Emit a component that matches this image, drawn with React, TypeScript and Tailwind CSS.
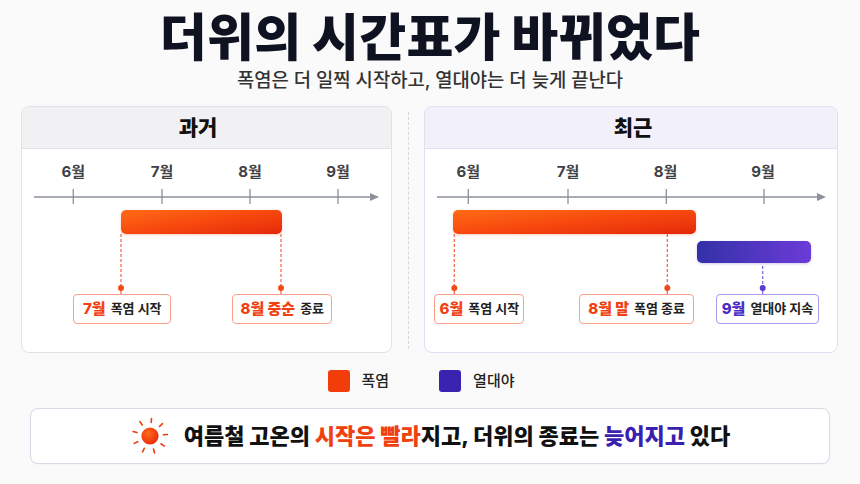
import React from "react";

function Sun() {
  const rays = [-125, -85, -45, -5, 35, 75, 115, 155, 195];
  return (
    <svg width="40" height="40" viewBox="0 0 40 40" className="shrink-0">
      <defs>
        <radialGradient id="sunG" cx="40%" cy="35%" r="70%">
          <stop offset="0%" stopColor="#ff6a1c" />
          <stop offset="100%" stopColor="#e8290a" />
        </radialGradient>
      </defs>
      <circle cx="20" cy="20" r="8.6" fill="url(#sunG)" />
      {rays.map((a) => {
        const r = (a * Math.PI) / 180;
        return (
          <line
            key={a}
            x1={20 + Math.cos(r) * 13.5}
            y1={20 + Math.sin(r) * 13.5}
            x2={20 + Math.cos(r) * 17.5}
            y2={20 + Math.sin(r) * 17.5}
            stroke="#ee3a0e"
            strokeWidth="1.6"
            strokeLinecap="round"
          />
        );
      })}
    </svg>
  );
}

function Axis({ end, ticks }: { end: number; ticks: number[] }) {
  return (
    <>
      <line x1="12" y1="48" x2={end - 8} y2="48" stroke="#8b909c" strokeWidth="1.3" />
      <polygon points={`${end - 9},44 ${end},48 ${end - 9},52`} fill="#8b909c" />
      {ticks.map((t) => (
        <line key={t} x1={t} y1="40" x2={t} y2="55" stroke="#8b909c" strokeWidth="1.3" />
      ))}
    </>
  );
}

function Connector({ x, from, color, dot }: { x: number; from: number; color: string; dot: string }) {
  return (
    <>
      <line x1={x} y1={from} x2={x} y2="139" stroke={color} strokeWidth="1.2" strokeDasharray="3 2" />
      <line x1={x} y1="139" x2={x} y2="145" stroke={color} strokeWidth="1.2" />
      <circle cx={x} cy="139" r="3" fill={dot} />
    </>
  );
}

export default function App() {
  return (
    <div className="w-[860px] h-[484px] overflow-hidden bg-[#fafafb] flex flex-col items-center font-['Inter','Noto_Sans_CJK_KR',sans-serif] text-[#111]">
      <h1 className="mt-[12px] text-[51px] leading-[51px] font-black text-[#0f1220] tracking-[0.3px]">
        더위의 시간표가 바뀌었다
      </h1>
      <p className="mt-[6px] text-[18.8px] leading-[24px] font-medium text-[#333]">
        폭염은 더 일찍 시작하고, 열대야는 더 늦게 끝난다
      </p>

      <div className="mt-[13px] w-full px-[21px] flex">
        {/* Left panel */}
        <div className="w-[371px] h-[247px] rounded-[8px] border border-[#e1e1e8] bg-white overflow-hidden flex flex-col">
          <div className="h-[42px] shrink-0 bg-[#f1f1f4] border-b border-[#e1e1e8] flex items-center justify-center pr-[17px]">
            <span className="text-[21px] font-extrabold text-[#111]">과거</span>
          </div>
          <div className="relative flex-1">
            <svg width="369" height="204" className="absolute left-0 top-0">
              <Axis end={357} ticks={[51.3, 140, 228, 316]} />
              <Connector x={99} from={85} color="#f4603c" dot="#f04a1a" />
              <Connector x={259} from={85} color="#f4603c" dot="#f04a1a" />
            </svg>
            <span className="absolute top-[14px] left-[51.3px] -translate-x-1/2 text-[15px] leading-[18px] font-bold text-[#3f3f46]">6월</span>
            <span className="absolute top-[14px] left-[140px] -translate-x-1/2 text-[15px] leading-[18px] font-bold text-[#3f3f46]">7월</span>
            <span className="absolute top-[14px] left-[228px] -translate-x-1/2 text-[15px] leading-[18px] font-bold text-[#3f3f46]">8월</span>
            <span className="absolute top-[14px] left-[316px] -translate-x-1/2 text-[15px] leading-[18px] font-bold text-[#3f3f46]">9월</span>
            <div className="absolute left-[98.7px] top-[61px] w-[161.3px] h-[24px] rounded-[5px] bg-linear-to-br from-[#ff6a16] via-[#f7480e] to-[#e4260a] shadow-[0_1px_3px_rgba(230,60,10,0.25)]" />
            <div className="absolute left-[51.3px] top-[145px] w-[98px] h-[30px] rounded-[4px] border border-[#f8a08a] bg-white flex items-center justify-center gap-[5px]">
              <span className="text-[15px] font-extrabold text-[#f0400f]">7월</span>
              <span className="text-[13px] font-bold text-[#222]">폭염 시작</span>
            </div>
            <div className="absolute left-[210.3px] top-[145px] w-[100px] h-[30px] rounded-[4px] border border-[#f8a08a] bg-white flex items-center justify-center gap-[5px]">
              <span className="text-[15px] font-extrabold text-[#f0400f]">8월 중순</span>
              <span className="text-[13px] font-bold text-[#222]">종료</span>
            </div>
          </div>
        </div>

        {/* Divider */}
        <div className="w-[32px] flex justify-center pt-[6px] pb-[4px]">
          <div className="h-full border-l border-dashed border-[#d6d6dd]" />
        </div>

        {/* Right panel */}
        <div className="w-[414px] h-[247px] rounded-[8px] border border-[#e0def0] bg-white overflow-hidden flex flex-col">
          <div className="h-[42px] shrink-0 bg-[#f1f0fb] border-b border-[#e0def0] flex items-center justify-center pl-[4px]">
            <span className="text-[21px] font-extrabold text-[#111]">최근</span>
          </div>
          <div className="relative flex-1">
            <svg width="412" height="204" className="absolute left-0 top-0">
              <Axis end={401} ticks={[43.3, 143, 241.3, 339]} />
              <Connector x={29.3} from={85} color="#f4603c" dot="#f04a1a" />
              <Connector x={242.3} from={85} color="#f4603c" dot="#f04a1a" />
              <Connector x={337.7} from={117} color="#7d5ce2" dot="#5b3ad2" />
            </svg>
            <span className="absolute top-[14px] left-[43.3px] -translate-x-1/2 text-[15px] leading-[18px] font-bold text-[#3f3f46]">6월</span>
            <span className="absolute top-[14px] left-[143px] -translate-x-1/2 text-[15px] leading-[18px] font-bold text-[#3f3f46]">7월</span>
            <span className="absolute top-[14px] left-[240.5px] -translate-x-1/2 text-[15px] leading-[18px] font-bold text-[#3f3f46]">8월</span>
            <span className="absolute top-[14px] left-[338px] -translate-x-1/2 text-[15px] leading-[18px] font-bold text-[#3f3f46]">9월</span>
            <div className="absolute left-[28.3px] top-[61px] w-[242.4px] h-[24px] rounded-[5px] bg-linear-to-br from-[#ff6a16] via-[#f7480e] to-[#e4260a] shadow-[0_1px_3px_rgba(230,60,10,0.25)]" />
            <div className="absolute left-[271.7px] top-[92.3px] w-[114.3px] h-[22px] rounded-[5px] bg-linear-to-r from-[#3330a8] to-[#6c3bd8] shadow-[0_1px_3px_rgba(70,40,180,0.25)]" />
            <div className="absolute left-[9.3px] top-[145px] w-[90px] h-[30px] rounded-[4px] border border-[#f8a08a] bg-white flex items-center justify-center gap-[5px]">
              <span className="text-[15px] font-extrabold text-[#f0400f]">6월</span>
              <span className="text-[13px] font-bold text-[#222]">폭염 시작</span>
            </div>
            <div className="absolute left-[154px] top-[145px] w-[115.3px] h-[30px] rounded-[4px] border border-[#f8a08a] bg-white flex items-center justify-center gap-[5px]">
              <span className="text-[15px] font-extrabold text-[#f0400f]">8월 말</span>
              <span className="text-[13px] font-bold text-[#222]">폭염 종료</span>
            </div>
            <div className="absolute left-[290.7px] top-[145px] w-[103.6px] h-[30px] rounded-[4px] border border-[#aa9aec] bg-white flex items-center justify-center gap-[5px]">
              <span className="text-[15px] font-extrabold text-[#4a2bc4]">9월</span>
              <span className="text-[13px] font-bold text-[#222]">열대야 지속</span>
            </div>
          </div>
        </div>
      </div>

      {/* Legend */}
      <div className="mt-[17px] h-[22px] flex items-center pr-[17px]">
        <div className="flex items-center gap-[11px]">
          <div className="w-[22px] h-[22px] rounded-[3px] bg-[#f23c0a]" />
          <span className="text-[15px] font-medium text-[#222]">폭염</span>
        </div>
        <div className="ml-[50px] flex items-center gap-[12px]">
          <div className="w-[22px] h-[22px] rounded-[3px] bg-[#3a23b0]" />
          <span className="text-[15px] font-medium text-[#222]">열대야</span>
        </div>
      </div>

      {/* Bottom summary */}
      <div className="mt-[16px] w-[800px] h-[56px] rounded-[8px] border border-[#d9d9e6] bg-white flex items-center justify-center gap-[14px] shadow-[0_1px_2px_rgba(0,0,0,0.03)]">
        <Sun />
        <p className="text-[22px] font-extrabold text-[#111] leading-none">
          여름철 고온의 <span className="text-[#f0400f]">시작은 빨라</span>지고, 더위의 종료는{" "}
          <span className="text-[#3b1fae]">늦어지고</span> 있다
        </p>
      </div>
    </div>
  );
}
